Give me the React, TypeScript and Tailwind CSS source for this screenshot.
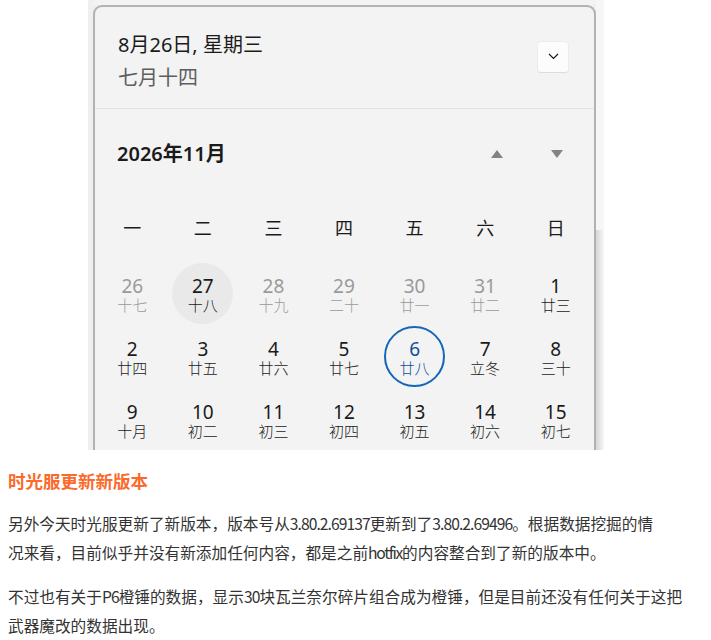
import React from 'react';

type Day = { n: number; lunar: string; muted?: boolean; hover?: boolean; selected?: boolean };

const weekdays = ['一', '二', '三', '四', '五', '六', '日'];

const days: Day[] = [
  { n: 26, lunar: '十七', muted: true },
  { n: 27, lunar: '十八', hover: true },
  { n: 28, lunar: '十九', muted: true },
  { n: 29, lunar: '二十', muted: true },
  { n: 30, lunar: '廿一', muted: true },
  { n: 31, lunar: '廿二', muted: true },
  { n: 1, lunar: '廿三' },
  { n: 2, lunar: '廿四' },
  { n: 3, lunar: '廿五' },
  { n: 4, lunar: '廿六' },
  { n: 5, lunar: '廿七' },
  { n: 6, lunar: '廿八', selected: true },
  { n: 7, lunar: '立冬' },
  { n: 8, lunar: '三十' },
  { n: 9, lunar: '十月' },
  { n: 10, lunar: '初二' },
  { n: 11, lunar: '初三' },
  { n: 12, lunar: '初四' },
  { n: 13, lunar: '初五' },
  { n: 14, lunar: '初六' },
  { n: 15, lunar: '初七' },
];

const uiFont = "font-['Noto_Sans','Noto_Sans_CJK_SC',sans-serif]";

function DayCell({ day }: { day: Day }) {
  let ring = 'border-2 border-transparent';
  if (day.hover) ring = 'border-2 border-transparent bg-[#e9e9e9]';
  if (day.selected) ring = 'border-2 border-[#1466b8]';

  let color = 'text-[#1a1a1a]';
  if (day.muted) color = 'text-[#9a9a9a]';
  if (day.selected) color = 'text-[#0c4f98]';

  return (
    <div className="h-[63px] flex items-center justify-center">
      <div className={`w-[61px] h-[61px] pt-[5px] rounded-full flex flex-col items-center justify-center ${ring} ${color}`}>
        <span className="text-[19px] leading-[18px]">{day.n}</span>
        <span className="text-[15px] leading-[19px] font-['Noto_Sans_CJK_SC',sans-serif] font-light">{day.lunar}</span>
      </div>
    </div>
  );
}

function CalendarFlyout() {
  return (
    <div className="w-[516px] h-[450px] ml-[88px] bg-[#efefef] flex overflow-hidden">
      <div className="w-[5px] shrink-0" />
      <div className="flex flex-col shrink-0">
        <div className="h-[5px] bg-[#f3f3f3]" />
        {/* flyout panel */}
        <div className={`w-[503px] h-[460px] bg-[#f3f3f3] border-2 border-b-0 border-[#b2b2b2] rounded-t-[9px] overflow-hidden ${uiFont}`}>
          <div className="h-[102px] border-b border-[#e2e2e2] flex items-start justify-between pl-[23px] pr-[25px]">
            <div className="pt-[23px]">
              <div className="text-[20px] leading-[30px] text-[#1b1b1b]">8月26日, 星期三</div>
              <div className="text-[20px] leading-[36px] text-[#5e5e5e]">七月十四</div>
            </div>
            <button className="mt-[34px] w-[32px] h-[32px] rounded-[4px] bg-[#fcfcfc] border border-[#ececec] border-b-[#dcdcdc] flex items-center justify-center">
              <svg width="11" height="7" viewBox="0 0 11 7">
                <path d="M1 1 L5.5 5.5 L10 1" fill="none" stroke="#1a1a1a" strokeWidth="1.2" />
              </svg>
            </button>
          </div>

          <div className="h-[91px] flex items-center justify-between pl-[22px] pr-[31px]">
            <span className="text-[20px] font-semibold text-[#1b1b1b]">2026年11月</span>
            <div className="flex items-center gap-[48px]">
              <svg width="12" height="8" viewBox="0 0 12 8">
                <path d="M6 0 L12 8 L0 8 Z" fill="#838383" />
              </svg>
              <svg width="12" height="8" viewBox="0 0 12 8">
                <path d="M0 0 L12 0 L6 8 Z" fill="#838383" />
              </svg>
            </div>
          </div>

          <div className="grid grid-cols-7 pl-[2px] pr-[3px]">
            {weekdays.map((w) => (
              <div key={w} className="h-[62px] pb-[7px] flex items-center justify-center text-[18px] text-[#1a1a1a] font-['Noto_Sans_CJK_SC',sans-serif]">
                {w}
              </div>
            ))}
            {days.map((d) => (
              <DayCell key={`${d.n}-${d.lunar}`} day={d} />
            ))}
          </div>
        </div>
      </div>
      <div className="w-[8px] shrink-0 flex flex-col">
        <div className="h-[230px] bg-[#f6f6f6]" />
        <div className="flex-1 bg-gradient-to-r from-[#d6d6d6] to-[#f7f7f7]" />
      </div>
    </div>
  );
}

// latin runs inside the article are set a little tighter than the CJK text
function Latin({ children, tight = false }: { children: React.ReactNode; tight?: boolean }) {
  return <span className={tight ? 'tracking-[-1.3px]' : 'tracking-[-0.95px]'}>{children}</span>;
}

export default function App() {
  return (
    <div className="w-[711px] h-[640px] bg-white overflow-hidden font-['Noto_Sans_CJK_SC',sans-serif]">
      <CalendarFlyout />

      <div className="px-[8px]">
        <h2 className="mt-[16px] text-[17.5px] leading-[30px] font-bold text-[#fb6a2b]">时光服更新新版本</h2>
        <p className="mt-[13px] text-[15.67px] leading-[29px] text-[#333333] whitespace-nowrap">
          另外今天时光服更新了新版本，版本号从<Latin>3.80.2.69137</Latin>更新到了<Latin>3.80.2.69496</Latin>。根据数据挖掘的情
          <br />
          况来看，目前似乎并没有新添加任何内容，都是之前<Latin tight>hotfix</Latin>的内容整合到了新的版本中。
        </p>
        <p className="mt-[15px] text-[15.67px] leading-[29px] text-[#333333] whitespace-nowrap">
          不过也有关于<Latin>P6</Latin>橙锤的数据，显示<Latin>30</Latin>块瓦兰奈尔碎片组合成为橙锤，但是目前还没有任何关于这把
          <br />
          武器魔改的数据出现。
        </p>
      </div>
    </div>
  );
}
